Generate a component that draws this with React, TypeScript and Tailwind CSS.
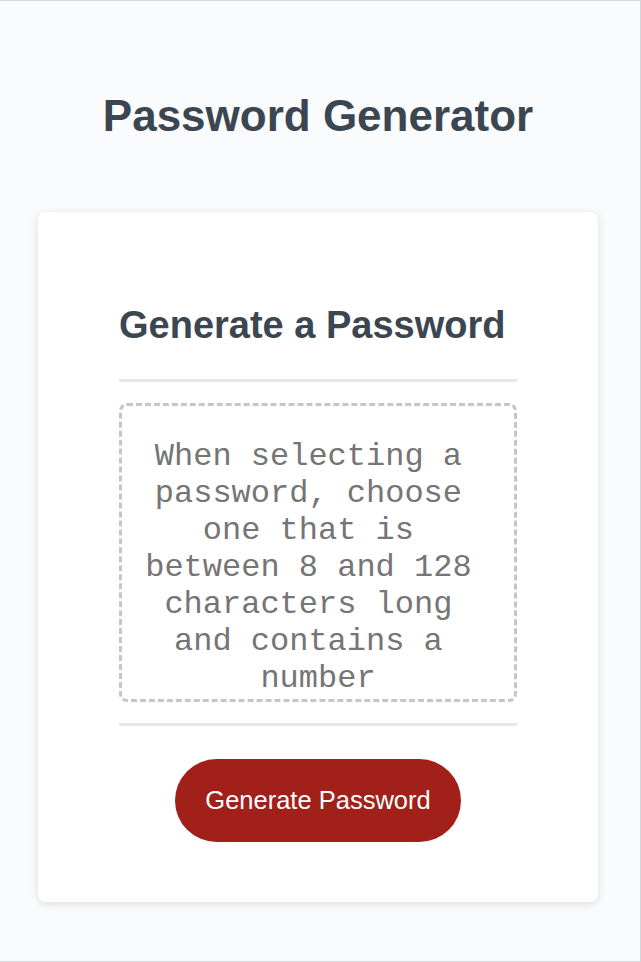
export default function App() {
  return (
    <div className="h-[962px] w-full overflow-hidden border-t border-r border-b border-[#d4d6d9] bg-[#f9fbfd] pr-[4px] font-['Liberation_Sans',Arial,sans-serif]">
      <div className="flex flex-col items-center">
        <h1 className="mt-[93px] text-[44px] leading-none font-bold text-[#3b4651]">
          Password Generator
        </h1>

        <div className="mt-[74px] flex w-[560px] flex-col rounded-lg bg-white px-[81px] pt-[94px] pb-[60px] shadow-[0_2px_10px_rgba(0,0,0,0.12)]">
          <h2 className="text-[38px] leading-none font-bold text-[#3b4651]">
            Generate a Password
          </h2>

          <div className="mt-[35px] h-[3px] w-full bg-[#e8e8e8]" />

          {/* trailing spaces count toward centering, like the original textarea */}
          <div className="mt-[21px] h-[299px] overflow-hidden rounded-lg border-[3px] border-dashed border-[#c3c7cc] px-[22px] pt-[32px] text-center font-['Liberation_Mono','Courier_New',monospace] text-[32px] leading-[37px] whitespace-break-spaces text-[#757575]">
            {"When selecting a password, choose one that is between 8 and 128 characters long and contains a number"}
          </div>

          <div className="mt-[21px] h-[3px] w-full bg-[#e8e8e8]" />

          <button
            type="button"
            className="mx-auto mt-[33px] h-[83px] rounded-full bg-[#a1201a] px-[30px] text-[25.5px] text-white"
          >
            Generate Password
          </button>
        </div>
      </div>
    </div>
  );
}
